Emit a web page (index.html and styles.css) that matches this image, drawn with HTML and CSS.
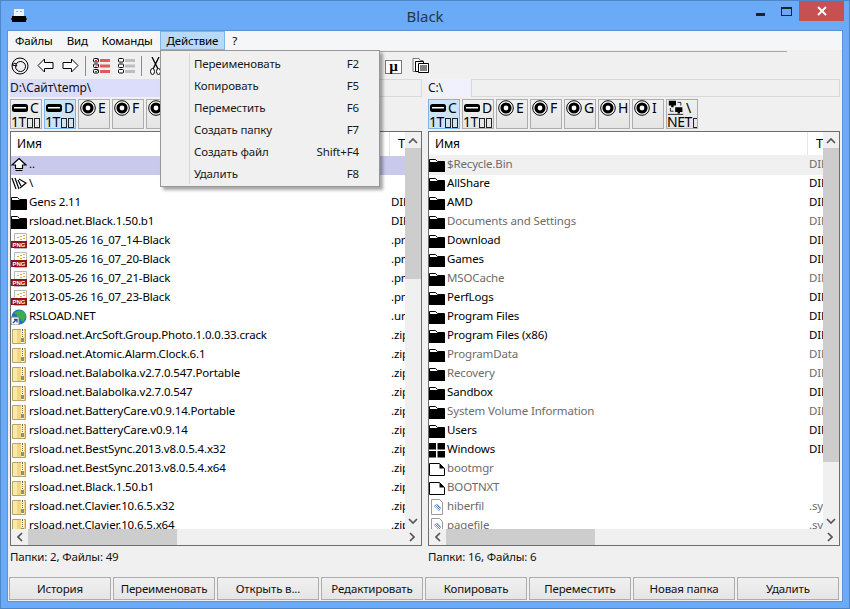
FILE: index.html
```html
<!DOCTYPE html>
<html lang="ru">
<head>
<meta charset="utf-8">
<title>Black</title>
<link rel="stylesheet" href="styles.css">
</head>
<body>
<svg class="sprite" xmlns="http://www.w3.org/2000/svg">
  <symbol id="folder" viewBox="0 0 16 16"><path d="M.5 12V2.500h6l2 2h7V6" fill="#fff" stroke="#000"/><rect x="0" y="5" width="16" height="10" fill="#000"/></symbol>
  <symbol id="winfolder" viewBox="0 0 16 16"><path d="M0 1h7v6.500H0zM8.500 1H16v6.500H8.500zM0 9h7v6.500H0zM8.500 9H16v6.500H8.500z" fill="#000"/></symbol>
  <symbol id="zip" viewBox="0 0 16 16"><path d="M1.500 1.500h13v14h-13z" fill="#f4d67f" stroke="#b8a36a"/><path d="M2 2h4v13H2z" fill="#fbe9ac"/><path d="M10 1h3v14h-3z" fill="#fff4cf"/><path d="M11 1h1v2h-1zM11 4h1v1h-1zM11 6h1v1h-1zM11 8h1v1h-1z" fill="#6a6a6a"/><path d="M10 10h3v4h-3z" fill="#8c8c8c"/></symbol>
  <symbol id="png" viewBox="0 0 16 16"><path d="M3.500.5h12v15h-12z" fill="#fff" stroke="#b9b9b9"/><path d="M6 4h2v1H6zM9 3h2v1H9zM12 2h2v1h-2zM9 6h2v1H9zM12 5h2v1h-2z" fill="#f2a32c"/><rect x="0" y="8" width="16" height="7" fill="#8b1414"/><text x="8" y="14" text-anchor="middle" class="pngtext">PNG</text></symbol>
  <symbol id="globe" viewBox="0 0 16 16"><circle cx="8" cy="8" r="7.500" fill="#1f6fc4"/><path d="M3 4c2-2 5-3 8-2 2 1 4 3 4 6l-2 4-2 1-1-3-3-1-1-3-3-2z" fill="#3fae45"/><rect x="0" y="8" width="8" height="8" fill="#fff" stroke="#7d7d7d"/><path d="M2 14l3-3M3 10.500h3v3" fill="none" stroke="#1a4fa0" stroke-width="1.300"/></symbol>
  <symbol id="up" viewBox="0 0 16 16"><path d="M8 1.500L15 8h-3.500v3.500h-7V8H1z M4.500 13.500h7" fill="#fff" stroke="#000" stroke-width="1.200"/></symbol>
  <symbol id="root" viewBox="0 0 16 16"><path d="M1 2l4 11M4 2l4 11M7 4l3 6M8 3l7 4-6 5" fill="none" stroke="#000" stroke-width="1.200"/></symbol>
  <symbol id="page" viewBox="0 0 16 16"><path d="M.5 2.500h10l5 5v7H.5z" fill="#fff" stroke="#000"/><path d="M10.500 2.500l5 5h-5z" fill="#000"/></symbol>
  <symbol id="sys" viewBox="0 0 16 16"><path d="M2.500.5h8l3 3v12h-11z" fill="#fff" stroke="#9a9a9a"/><path d="M5 7l3-2 4 4-2 3z" fill="#4a7fc4"/><path d="M6 7l4 4M7 6l4 4" stroke="#fff"/></symbol>
  <symbol id="hdd" viewBox="0 0 16 16"><rect x="0" y="4" width="16" height="8" rx="2.500" fill="#000"/><rect x="2" y="7" width="12" height="1.500" fill="#fff"/></symbol>
  <symbol id="cd" viewBox="0 0 16 16"><circle cx="8" cy="8" r="7.300" fill="#fff" stroke="#000"/><circle cx="8" cy="8" r="4" fill="none" stroke="#000" stroke-width="3.200"/></symbol>
  <symbol id="net" viewBox="0 0 20 18"><path d="M1 0h9v6H7v2H4V6H1zM9 8h9v6h-3v2h-3v-2H9z" fill="#000"/><path d="M12 2h4v4M3 9v4h4" fill="none" stroke="#000"/><path d="M0 17h19" stroke="#000"/></symbol>
  <symbol id="chev-up" viewBox="0 0 10 6"><path d="M1 5l4-4 4 4" fill="none" stroke="#555" stroke-width="1.700"/></symbol>
  <symbol id="chev-down" viewBox="0 0 10 6"><path d="M1 1l4 4 4-4" fill="none" stroke="#555" stroke-width="1.700"/></symbol>
  <symbol id="chev-left" viewBox="0 0 6 10"><path d="M5 1L1 5l4 4" fill="none" stroke="#555" stroke-width="1.700"/></symbol>
  <symbol id="chev-right" viewBox="0 0 6 10"><path d="M1 1l4 4-4 4" fill="none" stroke="#555" stroke-width="1.700"/></symbol>
</svg>

<div class="window">
  <header class="titlebar">
    <svg class="app-icon" viewBox="0 0 16 16"><path d="M3 1h10v7H3z" fill="#eef3fb"/><path d="M5 3h2v1H5zM9 3h2v1H9z" fill="#8fb0d8"/><path d="M1 8h14v6H1z" fill="#000"/><path d="M0 10h1v2H0zM15 10h1v2h-1z" fill="#333"/></svg>
    <span class="title">Black</span>
    <div class="controls">
      <span class="ctl ctl-min"></span>
      <span class="ctl ctl-max"></span>
      <span class="ctl-close"><svg viewBox="0 0 10 10" class="x"><path d="M1 1l8 8M9 1l-8 8" stroke="#fff" stroke-width="2"/></svg></span>
    </div>
  </header>

  <div class="client">
    <nav class="menubar">
      <span class="mi">Файлы</span><span class="mi">Вид</span><span class="mi">Команды</span><span class="mi mi-active">Действие</span><span class="mi">?</span>
    </nav>

    <div class="toolbar">
      <svg class="tb tb-refresh" viewBox="0 0 18 18"><circle cx="9" cy="9" r="8" fill="none" stroke="#000"/><circle cx="9.500" cy="9.500" r="5" fill="none" stroke="#000"/><path d="M1 8l3-2 2 3z" fill="#fff" stroke="#000"/></svg>
      <svg class="tb tb-arrow" viewBox="0 0 17 15"><path d="M7.500 1L1 7.500 7.500 14v-3.500h8.500v-6H7.500z" fill="#fff" stroke="#000"/></svg>
      <svg class="tb tb-arrow" viewBox="0 0 17 15"><path d="M9.500 1L16 7.500 9.500 14v-3.500H1v-6h8.500z" fill="#fff" stroke="#000"/></svg>
      <span class="tb-sep"></span>
      <svg class="tb tb-list" viewBox="0 0 17 16"><g fill="#fff" stroke="#000"><rect x=".5" y=".5" width="5" height="3.500" rx="1"/><rect x=".5" y="6" width="5" height="3.500" rx="1"/><rect x=".5" y="11.500" width="5" height="3.500" rx="1"/></g><path d="M2 2l1 1 2-2M2 7.500l1 1 2-2M2 13l1 1 2-2" fill="none" stroke="#d01818"/><path d="M7 1h10v3H7zM7 6.500h10v3H7zM7 12h10v3H7z" fill="#e15a5a"/></svg>
      <svg class="tb tb-list tb-list2" viewBox="0 0 17 16"><g fill="#fff" stroke="#000"><rect x=".5" y=".5" width="5" height="3.500" rx="1"/><rect x=".5" y="6" width="5" height="3.500" rx="1"/><rect x=".5" y="11.500" width="5" height="3.500" rx="1"/></g><path d="M7 1h10v3H7zM7 6.500h10v3H7zM7 12h10v3H7z" fill="#bdbdbd"/></svg>
      <span class="tb-sep tb-sep2"></span>
      <svg class="tb tb-cut" viewBox="0 0 11 18"><path d="M2 0l6 12M9 0L3 12" stroke="#000" stroke-width="1.300" fill="none"/><ellipse cx="2.500" cy="14.500" rx="2" ry="3" fill="#fff" stroke="#000"/><ellipse cx="8.500" cy="14.500" rx="2" ry="3" fill="#fff" stroke="#000"/></svg>
      <span class="tb-spacer"></span>
      <span class="tb-mu">µ</span>
      <svg class="tb tb-copy" viewBox="0 0 17 15"><path d="M1 .500h6l1 2h3v11H1z" fill="#fff" stroke="#777"/><path d="M3.500 3.500h8v10h-8z" fill="#fff" stroke="#000"/><path d="M6.500 5.500h10v9h-10z" fill="#fff" stroke="#000"/><path d="M8 8h7M8 10h7M8 12h7" stroke="#000"/></svg>
    </div>

    <div class="panes">
      <section class="pane">
        <div class="pathbar"><span class="path path-active">D:\Сайт\temp\</span></div>
        <div class="drives">
          <div class="drive"><div class="dl"><svg class="di"><use href="#hdd"/></svg><span>C</span></div><div class="dn">1T<i class="tofu"></i><i class="tofu"></i><i class="tofu"></i></div></div>
          <div class="drive drive-on"><div class="dl"><svg class="di"><use href="#hdd"/></svg><span>D</span></div><div class="dn">1T<i class="tofu"></i><i class="tofu"></i><i class="tofu"></i></div></div>
          <div class="drive"><div class="dl"><svg class="di"><use href="#cd"/></svg><span>E</span></div></div>
          <div class="drive"><div class="dl"><svg class="di"><use href="#cd"/></svg><span>F</span></div></div>
          <div class="drive"><div class="dl"><svg class="di"><use href="#cd"/></svg><span>G</span></div></div>
        </div>
        <div class="list">
          <div class="list-top">
            <div class="cols">
              <div class="hdr"><span class="hn">Имя</span><span class="ht">Тип</span></div>
              <div class="row row-sel"><svg class="ic"><use href="#up"/></svg><span class="n">..</span><span class="t"></span></div>
              <div class="row"><svg class="ic"><use href="#root"/></svg><span class="n">\</span><span class="t"></span></div>
              <div class="row"><svg class="ic"><use href="#folder"/></svg><span class="n">Gens 2.11</span><span class="t">DIR</span></div>
              <div class="row"><svg class="ic"><use href="#folder"/></svg><span class="n">rsload.net.Black.1.50.b1</span><span class="t">DIR</span></div>
              <div class="row"><svg class="ic"><use href="#png"/></svg><span class="n">2013-05-26 16_07_14-Black</span><span class="t">.png</span></div>
              <div class="row"><svg class="ic"><use href="#png"/></svg><span class="n">2013-05-26 16_07_20-Black</span><span class="t">.png</span></div>
              <div class="row"><svg class="ic"><use href="#png"/></svg><span class="n">2013-05-26 16_07_21-Black</span><span class="t">.png</span></div>
              <div class="row"><svg class="ic"><use href="#png"/></svg><span class="n">2013-05-26 16_07_23-Black</span><span class="t">.png</span></div>
              <div class="row"><svg class="ic"><use href="#globe"/></svg><span class="n">RSLOAD.NET</span><span class="t">.url</span></div>
              <div class="row"><svg class="ic"><use href="#zip"/></svg><span class="n">rsload.net.ArcSoft.Group.Photo.1.0.0.33.crack</span><span class="t">.zip</span></div>
              <div class="row"><svg class="ic"><use href="#zip"/></svg><span class="n">rsload.net.Atomic.Alarm.Clock.6.1</span><span class="t">.zip</span></div>
              <div class="row"><svg class="ic"><use href="#zip"/></svg><span class="n">rsload.net.Balabolka.v2.7.0.547.Portable</span><span class="t">.zip</span></div>
              <div class="row"><svg class="ic"><use href="#zip"/></svg><span class="n">rsload.net.Balabolka.v2.7.0.547</span><span class="t">.zip</span></div>
              <div class="row"><svg class="ic"><use href="#zip"/></svg><span class="n">rsload.net.BatteryCare.v0.9.14.Portable</span><span class="t">.zip</span></div>
              <div class="row"><svg class="ic"><use href="#zip"/></svg><span class="n">rsload.net.BatteryCare.v0.9.14</span><span class="t">.zip</span></div>
              <div class="row"><svg class="ic"><use href="#zip"/></svg><span class="n">rsload.net.BestSync.2013.v8.0.5.4.x32</span><span class="t">.zip</span></div>
              <div class="row"><svg class="ic"><use href="#zip"/></svg><span class="n">rsload.net.BestSync.2013.v8.0.5.4.x64</span><span class="t">.zip</span></div>
              <div class="row"><svg class="ic"><use href="#zip"/></svg><span class="n">rsload.net.Black.1.50.b1</span><span class="t">.zip</span></div>
              <div class="row"><svg class="ic"><use href="#zip"/></svg><span class="n">rsload.net.Clavier.10.6.5.x32</span><span class="t">.zip</span></div>
              <div class="row"><svg class="ic"><use href="#zip"/></svg><span class="n">rsload.net.Clavier.10.6.5.x64</span><span class="t">.zip</span></div>
            </div>
            <div class="vscroll">
              <svg class="ch-v"><use href="#chev-up"/></svg>
              <div class="vthumb vthumb-short"></div>
              <svg class="ch-v ch-end"><use href="#chev-down"/></svg>
            </div>
          </div>
          <div class="hscroll">
            <svg class="ch-h"><use href="#chev-left"/></svg>
            <div class="hthumb"></div>
            <svg class="ch-h ch-end-h"><use href="#chev-right"/></svg>
          </div>
        </div>
        <div class="status">Папки: 2, Файлы: 49</div>
      </section>

      <section class="pane">
        <div class="pathbar"><span class="path path-idle">C:\</span></div>
        <div class="drives">
          <div class="drive drive-on"><div class="dl"><svg class="di"><use href="#hdd"/></svg><span>C</span></div><div class="dn">1T<i class="tofu"></i><i class="tofu"></i><i class="tofu"></i></div></div>
          <div class="drive"><div class="dl"><svg class="di"><use href="#hdd"/></svg><span>D</span></div><div class="dn">1T<i class="tofu"></i><i class="tofu"></i><i class="tofu"></i></div></div>
          <div class="drive"><div class="dl"><svg class="di"><use href="#cd"/></svg><span>E</span></div></div>
          <div class="drive"><div class="dl"><svg class="di"><use href="#cd"/></svg><span>F</span></div></div>
          <div class="drive"><div class="dl"><svg class="di"><use href="#cd"/></svg><span>G</span></div></div>
          <div class="drive"><div class="dl"><svg class="di"><use href="#cd"/></svg><span>H</span></div></div>
          <div class="drive"><div class="dl"><svg class="di"><use href="#cd"/></svg><span>I</span></div></div>
          <div class="drive"><div class="dl"><svg class="di"><use href="#net"/></svg><span>\</span></div><div class="dn">NET<i class="tofu"></i></div></div>
        </div>
        <div class="list">
          <div class="list-top">
            <div class="cols">
              <div class="hdr hdr-right"><span class="hn">Имя</span><span class="ht">Тип</span></div>
              <div class="row row-idle row-h"><svg class="ic"><use href="#folder"/></svg><span class="n">$Recycle.Bin</span><span class="t">DIR</span></div>
              <div class="row"><svg class="ic"><use href="#folder"/></svg><span class="n">AllShare</span><span class="t">DIR</span></div>
              <div class="row"><svg class="ic"><use href="#folder"/></svg><span class="n">AMD</span><span class="t">DIR</span></div>
              <div class="row row-h"><svg class="ic"><use href="#folder"/></svg><span class="n">Documents and Settings</span><span class="t">DIR</span></div>
              <div class="row"><svg class="ic"><use href="#folder"/></svg><span class="n">Download</span><span class="t">DIR</span></div>
              <div class="row"><svg class="ic"><use href="#folder"/></svg><span class="n">Games</span><span class="t">DIR</span></div>
              <div class="row row-h"><svg class="ic"><use href="#folder"/></svg><span class="n">MSOCache</span><span class="t">DIR</span></div>
              <div class="row"><svg class="ic"><use href="#folder"/></svg><span class="n">PerfLogs</span><span class="t">DIR</span></div>
              <div class="row"><svg class="ic"><use href="#folder"/></svg><span class="n">Program Files</span><span class="t">DIR</span></div>
              <div class="row"><svg class="ic"><use href="#folder"/></svg><span class="n">Program Files (x86)</span><span class="t">DIR</span></div>
              <div class="row row-h"><svg class="ic"><use href="#folder"/></svg><span class="n">ProgramData</span><span class="t">DIR</span></div>
              <div class="row row-h"><svg class="ic"><use href="#folder"/></svg><span class="n">Recovery</span><span class="t">DIR</span></div>
              <div class="row"><svg class="ic"><use href="#folder"/></svg><span class="n">Sandbox</span><span class="t">DIR</span></div>
              <div class="row row-h"><svg class="ic"><use href="#folder"/></svg><span class="n">System Volume Information</span><span class="t">DIR</span></div>
              <div class="row"><svg class="ic"><use href="#folder"/></svg><span class="n">Users</span><span class="t">DIR</span></div>
              <div class="row"><svg class="ic"><use href="#winfolder"/></svg><span class="n">Windows</span><span class="t">DIR</span></div>
              <div class="row row-h"><svg class="ic"><use href="#page"/></svg><span class="n">bootmgr</span><span class="t"></span></div>
              <div class="row row-h"><svg class="ic"><use href="#page"/></svg><span class="n">BOOTNXT</span><span class="t"></span></div>
              <div class="row row-h"><svg class="ic"><use href="#sys"/></svg><span class="n">hiberfil</span><span class="t">.sys</span></div>
              <div class="row row-h"><svg class="ic"><use href="#sys"/></svg><span class="n">pagefile</span><span class="t">.sys</span></div>
            </div>
            <div class="vscroll">
              <svg class="ch-v"><use href="#chev-up"/></svg>
              <div class="vthumb vthumb-long"></div>
              <svg class="ch-v ch-end"><use href="#chev-down"/></svg>
            </div>
          </div>
          <div class="hscroll">
            <svg class="ch-h"><use href="#chev-left"/></svg>
            <div class="hthumb"></div>
            <svg class="ch-h ch-end-h"><use href="#chev-right"/></svg>
          </div>
        </div>
        <div class="status">Папки: 16, Файлы: 6</div>
      </section>
    </div>

    <footer class="actions">
      <button class="btn">История</button>
      <button class="btn">Переименовать</button>
      <button class="btn">Открыть в...</button>
      <button class="btn">Редактировать</button>
      <button class="btn">Копировать</button>
      <button class="btn">Переместить</button>
      <button class="btn">Новая папка</button>
      <button class="btn">Удалить</button>
    </footer>
  </div>

  <div class="popup">
    <div class="pi"><span>Переименовать</span><span>F2</span></div>
    <div class="pi"><span>Копировать</span><span>F5</span></div>
    <div class="pi"><span>Переместить</span><span>F6</span></div>
    <div class="pi"><span>Создать папку</span><span>F7</span></div>
    <div class="pi"><span>Создать файл</span><span>Shift+F4</span></div>
    <div class="pi"><span>Удалить</span><span>F8</span></div>
  </div>
</div>
</body>
</html>
```

FILE: styles.css
```css
* { box-sizing: border-box; }
html, body { margin: 0; padding: 0; overflow: hidden; }
body {
  width: 850px;
  height: 609px;
  font-family: "Noto Sans", "Open Sans", sans-serif;
  font-size: 11.5px;
  letter-spacing: -0.15px;
  color: #000;
}
.sprite { position: absolute; width: 0; height: 0; overflow: hidden; }
.pngtext { font: bold 6px "Liberation Sans", sans-serif; fill: #fff; letter-spacing: 0; }

.window {
  position: relative;
  width: 850px;
  height: 609px;
  display: flex;
  flex-direction: column;
  background: #6aaaf6;
  border: 1px solid #4f86c6;
  padding: 0 6px 6px;
}

/* Title bar */
.titlebar {
  height: 29px;
  flex: none;
  display: flex;
  align-items: flex-start;
  position: relative;
}
.app-icon { width: 16px; height: 16px; margin: 7px 0 0 4px; }
.title {
  position: absolute;
  left: 0; right: 0;
  top: 5px;
  text-align: center;
  font-size: 15px;
  letter-spacing: 0;
  line-height: 20px;
  color: #27374a;
}
.controls {
  margin-left: auto;
  display: flex;
  align-items: flex-start;
  margin-right: -1px;
}
.ctl-min { display: block; width: 9px; height: 3px; margin: 12px 16px 0 0; background: #222; }
.ctl-max { display: block; width: 11px; height: 9px; margin: 6px 7px 0 0; border: 1px solid #222; border-top-width: 2px; }
.ctl-close {
  width: 45px;
  height: 20px;
  background: #c75050;
  display: flex;
  align-items: center;
  justify-content: center;
}
.x { width: 10px; height: 10px; }

/* Client */
.client {
  flex: 1;
  min-height: 0;
  display: flex;
  flex-direction: column;
  background: #f0f0f0;
  border: 1px solid #5a94d6;
}
.menubar {
  height: 20px;
  flex: none;
  display: flex;
  align-items: stretch;
  background: #f5f6f7;
  border-bottom: 1px solid #eeeeee;
}
.mi {
  line-height: 19px;
  padding: 0 7px;
}
.mi-active {
  background: #b8daf8;
  border: 1px solid #7fb4e8;
  line-height: 17px;
  padding: 0 6px;
}

/* Toolbar */
.toolbar {
  height: 28px;
  flex: none;
  display: flex;
  align-items: center;
  padding-left: 3px;
  margin-right: 55px;
  border-top: 1px solid #a6a6a6;
}
.tb { flex: none; display: block; }
.tb-refresh { width: 18px; height: 18px; }
.tb-arrow { width: 17px; height: 15px; margin-left: 8px; }
.tb-sep { width: 1px; height: 20px; background: #8a8a8a; margin: 0 7px 0 6px; flex: none; }
.tb-list { width: 17px; height: 16px; }
.tb-list2 { margin-left: 8px; }
.tb-sep2 { margin-left: 6px; margin-right: 8px; }
.tb-cut { width: 11px; height: 18px; }
.tb-spacer { width: 224px; flex: none; }
.tb-mu {
  width: 17px;
  height: 14px;
  border: 1px solid #777;
  background: #fff;
  font: bold 15px/11px "Liberation Serif", serif;
  text-align: center;
  margin-right: 10px;
  margin-top: 2px;
}
.tb-copy { width: 17px; height: 15px; }

/* Panes */
.panes {
  display: grid;
  grid-template-columns: 412px 412px;
  column-gap: 6px;
  padding: 0 2px;
}
.pane { display: flex; flex-direction: column; min-width: 0; }
.pathbar {
  height: 18px;
  display: flex;
  border: 1px solid #d9d9d9;
}
.path { display: block; color: #111; font-size: 12px; letter-spacing: -0.1px; margin: -1px 0 -1px -1px; line-height: 18px; }
.path-active { width: 200px; background: #dcdcfb; }
.path-idle { width: 44px; background: #f1f1fd; border-right: 1px solid #d9d9d9; }

.drives { display: flex; gap: 2px; margin-top: 2px; height: 30px; }
.drive {
  width: 32px;
  height: 30px;
  overflow: hidden;
  border: 1px solid #adadad;
  background: linear-gradient(#f0f0f0, #e5e5e5);
  font-size: 14px;
  letter-spacing: 0;
  line-height: 14px;
  white-space: nowrap;
}
.drive-on { background: #cde4f8; border-color: #7eb4ea; }
.dl { display: flex; align-items: center; height: 16px; padding-left: 1px; gap: 2px; }
.di { width: 16px; height: 16px; flex: none; }
.dn { margin-top: -1px; letter-spacing: -0.5px; }
.tofu {
  display: inline-block;
  width: 6px;
  height: 10px;
  margin-left: 1px;
  border: 1px solid #222;
  vertical-align: -0.5px;
}

/* List */
.list {
  margin-top: 2px;
  height: 415px;
  border: 1px solid #6d6d6d;
  background: #fff;
  display: flex;
  flex-direction: column;
}
.list-top { display: flex; height: 397px; flex: none; }
.cols { flex: 1; min-width: 0; overflow: hidden; }
.hdr { display: flex; height: 24px; line-height: 23px; font-size: 12px; }
.hdr-right { height: 23px; }
.hn { width: 379px; padding-left: 6px; border-right: 1px solid #e5e5e5; flex: none; }
.ht { flex: 1; min-width: 0; padding-left: 8px; overflow: hidden; font-size: 13px; }
.row { display: flex; height: 19px; line-height: 16px; white-space: nowrap; }
.row-sel { background: #c9c9ee; }
.row-idle { background: #f0f0f0; height: 20px; padding-top: 1px; }
.row-h { color: #6c6c6c; }
.ic { width: 16px; height: 16px; flex: none; margin-top: 1px; }
.n { width: 363px; flex: none; padding-left: 2px; overflow: hidden; }
.t { flex: 1; min-width: 0; overflow: hidden; padding-left: 1px; }

.vscroll {
  width: 16px;
  flex: none;
  background: #f0f0f0;
  display: flex;
  flex-direction: column;
  align-items: center;
}
.ch-v { width: 10px; height: 6px; flex: none; margin: 6px 0 4px; }
.ch-end { margin: auto 0 5px; }
.vthumb { width: 100%; background: #cdcdcd; flex: none; }
.vthumb-short { height: 131px; }
.vthumb-long { height: 314px; }

.hscroll {
  height: 16px;
  flex: none;
  background: #f0f0f0;
  display: flex;
  align-items: center;
}
.ch-h { width: 6px; height: 10px; flex: none; margin: 0 5px 0 6px; }
.hthumb { width: 149px; height: 16px; background: #cdcdcd; flex: none; }
.ch-end-h { margin: 0 6px 0 auto; }

.status { height: 31px; line-height: 22px; color: #111; }

/* Footer buttons */
.actions {
  display: grid;
  grid-template-columns: repeat(8, 102px);
  column-gap: 2px;
  padding-left: 1px;
  height: 23px;
}
.btn {
  height: 23px;
  padding: 0;
  font: inherit;
  letter-spacing: inherit;
  color: #111;
  border: 1px solid #adadad;
  border-radius: 0;
  background: linear-gradient(#f0f0f0, #e5e5e5);
}

/* Popup */
.popup {
  position: absolute;
  left: 159px;
  top: 49px;
  width: 220px;
  height: 137px;
  padding: 3px 0 0 33px;
  background: #f0f0f0;
  border: 1px solid #979797;
  box-shadow: 3px 3px 3px rgba(0, 0, 0, 0.35);
  color: #1a1a1a;
}
.popup::before {
  content: "";
  position: absolute;
  left: 28px;
  top: 2px;
  bottom: 2px;
  width: 1px;
  background: #d7d7d7;
}
.pi {
  height: 22px;
  line-height: 19px;
  display: flex;
  justify-content: space-between;
  padding-right: 20px;
}
```
